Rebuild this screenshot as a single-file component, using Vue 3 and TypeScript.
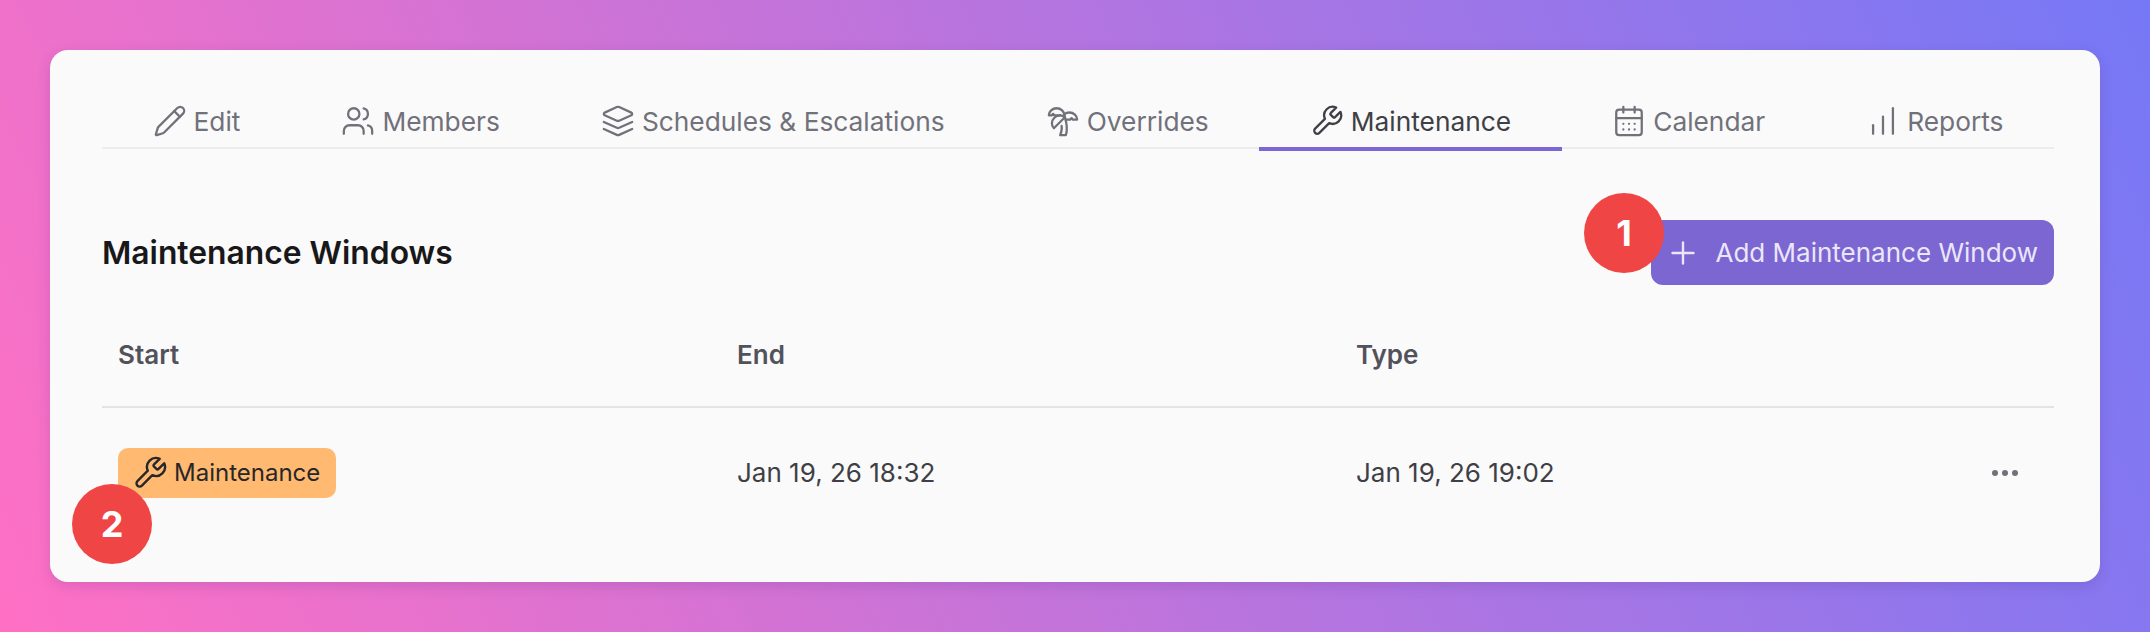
<script setup lang="ts">
const tabs = [
  { label: 'Edit', icon: 'pencil' },
  { label: 'Members', icon: 'users' },
  { label: 'Schedules & Escalations', icon: 'layers' },
  { label: 'Overrides', icon: 'palm' },
  { label: 'Maintenance', icon: 'wrench', active: true },
  { label: 'Calendar', icon: 'calendar' },
  { label: 'Reports', icon: 'chart' },
]

const icons: Record<string, string[]> = {
  pencil: [
    'M21.174 6.812a1 1 0 0 0-3.986-3.987L3.842 16.174a2 2 0 0 0-.5.83l-1.321 4.352a.5.5 0 0 0 .623.622l4.353-1.32a2 2 0 0 0 .83-.497z',
    'm15 5 4 4',
  ],
  users: [
    'M16 21v-2a4 4 0 0 0-4-4H6a4 4 0 0 0-4 4v2',
    'M9 3a4 4 0 1 0 0 8 4 4 0 0 0 0-8z',
    'M22 21v-2a4 4 0 0 0-3-3.87',
    'M16 3.13a4 4 0 0 1 0 7.75',
  ],
  layers: [
    'm12.83 2.18a2 2 0 0 0-1.66 0L2.6 6.08a1 1 0 0 0 0 1.83l8.58 3.91a2 2 0 0 0 1.66 0l8.58-3.9a1 1 0 0 0 0-1.83Z',
    'm22 17.65-9.17 4.16a2 2 0 0 1-1.66 0L2 17.65',
    'm22 12.65-9.17 4.16a2 2 0 0 1-1.66 0L2 12.65',
  ],
  palm: [
    'M13 8c0-2.76-2.46-5-5.5-5S2 5.24 2 8h2l1-1 1 1h4',
    'M13 7.14A5.82 5.82 0 0 1 16.5 6c3.04 0 5.5 2.24 5.5 5h-3l-1-1-1 1h-3',
    'M5.89 9.71c-2.15 2.15-2.3 5.47-.35 7.43l4.24-4.25.7-.7.71-.71 2.12-2.12c-1.95-1.96-5.27-1.8-7.42.35',
    'M11 15.5c.5 2.5-.17 4.5-1 6.5h4c2-5.5-.5-12-1-14',
  ],
  wrench: [
    'M14.7 6.3a1 1 0 0 0 0 1.4l1.6 1.6a1 1 0 0 0 1.4 0l3.77-3.77a6 6 0 0 1-7.94 7.94l-6.91 6.91a2.12 2.12 0 0 1-3-3l6.91-6.91a6 6 0 0 1 7.94-7.94l-3.76 3.76z',
  ],
  calendar: [
    'M8 2v4',
    'M16 2v4',
    'M5 4h14a2 2 0 0 1 2 2v14a2 2 0 0 1-2 2H5a2 2 0 0 1-2-2V6a2 2 0 0 1 2-2z',
    'M3 10h18',
    'M8 14h.01',
    'M12 14h.01',
    'M16 14h.01',
    'M8 18h.01',
    'M12 18h.01',
    'M16 18h.01',
  ],
  chart: ['M5 21v-6', 'M12 21V9', 'M19 21V3'],
  plus: ['M5 12h14', 'M12 5v14'],
}
</script>

<template>
  <div class="page">
    <section class="card">
      <nav class="tabs">
        <div v-for="tab in tabs" :key="tab.label" class="tab" :class="{ active: tab.active }">
          <svg class="icon" viewBox="0 0 24 24">
            <path v-for="d in icons[tab.icon]" :key="d" :d="d" />
          </svg>
          <span>{{ tab.label }}</span>
        </div>
      </nav>

      <div class="head">
        <h2>Maintenance Windows</h2>
        <button class="add">
          <svg class="icon plus" viewBox="0 0 24 24">
            <path v-for="d in icons.plus" :key="d" :d="d" />
          </svg>
          Add Maintenance Window
        </button>
      </div>

      <div class="row header">
        <div>Start</div>
        <div>End</div>
        <div>Type</div>
        <div></div>
      </div>
      <div class="row body">
        <div>
          <span class="tag">
            <svg class="icon" viewBox="0 0 24 24">
              <path v-for="d in icons.wrench" :key="d" :d="d" />
            </svg>
            Maintenance
          </span>
        </div>
        <div>Jan 19, 26 18:32</div>
        <div>Jan 19, 26 19:02</div>
        <div class="more"><i></i><i></i><i></i></div>
      </div>

      <span class="marker one">1</span>
      <span class="marker two">2</span>
    </section>
  </div>
</template>

<style scoped>
.page {
  box-sizing: border-box;
  width: 2150px;
  height: 632px;
  padding: 50px;
  background: linear-gradient(65deg, #ff70c4, #7678f6);
  font-family: Inter, "Liberation Sans", sans-serif;
}

.card {
  position: relative;
  box-sizing: border-box;
  height: 532px;
  padding: 52px 46px 0 52px;
  background: #fafafa;
  border-radius: 18px;
  box-shadow: 0 4px 14px rgba(60, 30, 120, 0.16);
}

.tabs {
  display: flex;
  box-sizing: border-box;
  height: 47px;
  border-bottom: 2px solid #ececee;
}

.tab {
  flex: 1 1 auto;
  display: flex;
  align-items: center;
  justify-content: center;
  gap: 7px;
  box-sizing: border-box;
  height: 49px;
  padding: 0 10px 7px;
  border-bottom: 4px solid transparent;
  font-size: 26.3px;
  color: #71717a;
}

.tab.active {
  color: #3f3f46;
  border-bottom-color: #7c66d2;
}

.icon {
  flex: none;
  width: 34px;
  height: 34px;
  fill: none;
  stroke: currentColor;
  stroke-width: 1.6;
  stroke-linecap: round;
  stroke-linejoin: round;
}

.head {
  display: flex;
  align-items: center;
  justify-content: space-between;
  margin-top: 71px;
}

h2 {
  margin: 0;
  font-size: 31.8px;
  font-weight: 600;
  color: #18181b;
}

.add {
  display: flex;
  align-items: center;
  gap: 15px;
  height: 65px;
  padding: 0 16px 0 14px;
  border: 0;
  border-radius: 12px;
  background: #7c66d2;
  color: #ebe7fa;
  font: inherit;
  font-size: 26px;
}

.plus {
  width: 36px;
  height: 36px;
}

.row {
  display: grid;
  grid-template-columns: 619px 619px 619px 1fr;
  align-items: center;
}

.row > div {
  padding-left: 16px;
}

.header {
  box-sizing: border-box;
  height: 123px;
  padding-top: 18px;
  border-bottom: 2px solid #e4e4e7;
  font-size: 26px;
  font-weight: 600;
  color: #52525b;
}

.body {
  height: 129px;
  font-size: 26px;
  color: #3f3f46;
}

.tag {
  display: inline-flex;
  align-items: center;
  gap: 6px;
  height: 50px;
  padding: 0 16px 0 14px;
  border-radius: 10px;
  background: #ffb970;
  color: #27272a;
  font-size: 24px;
}

.tag .icon {
  width: 36px;
  height: 36px;
}

.more {
  display: flex;
  justify-content: flex-end;
  gap: 4px;
  padding-right: 36px;
}

.more i {
  width: 6px;
  height: 6px;
  border-radius: 50%;
  background: #71717a;
}

.marker {
  position: absolute;
  display: flex;
  align-items: center;
  justify-content: center;
  width: 80px;
  height: 80px;
  border-radius: 50%;
  background: #f04545;
  color: #fff;
  font-size: 36px;
  font-weight: 700;
}

.one {
  left: 1534px;
  top: 143px;
}

.two {
  left: 22px;
  top: 434px;
}
</style>
